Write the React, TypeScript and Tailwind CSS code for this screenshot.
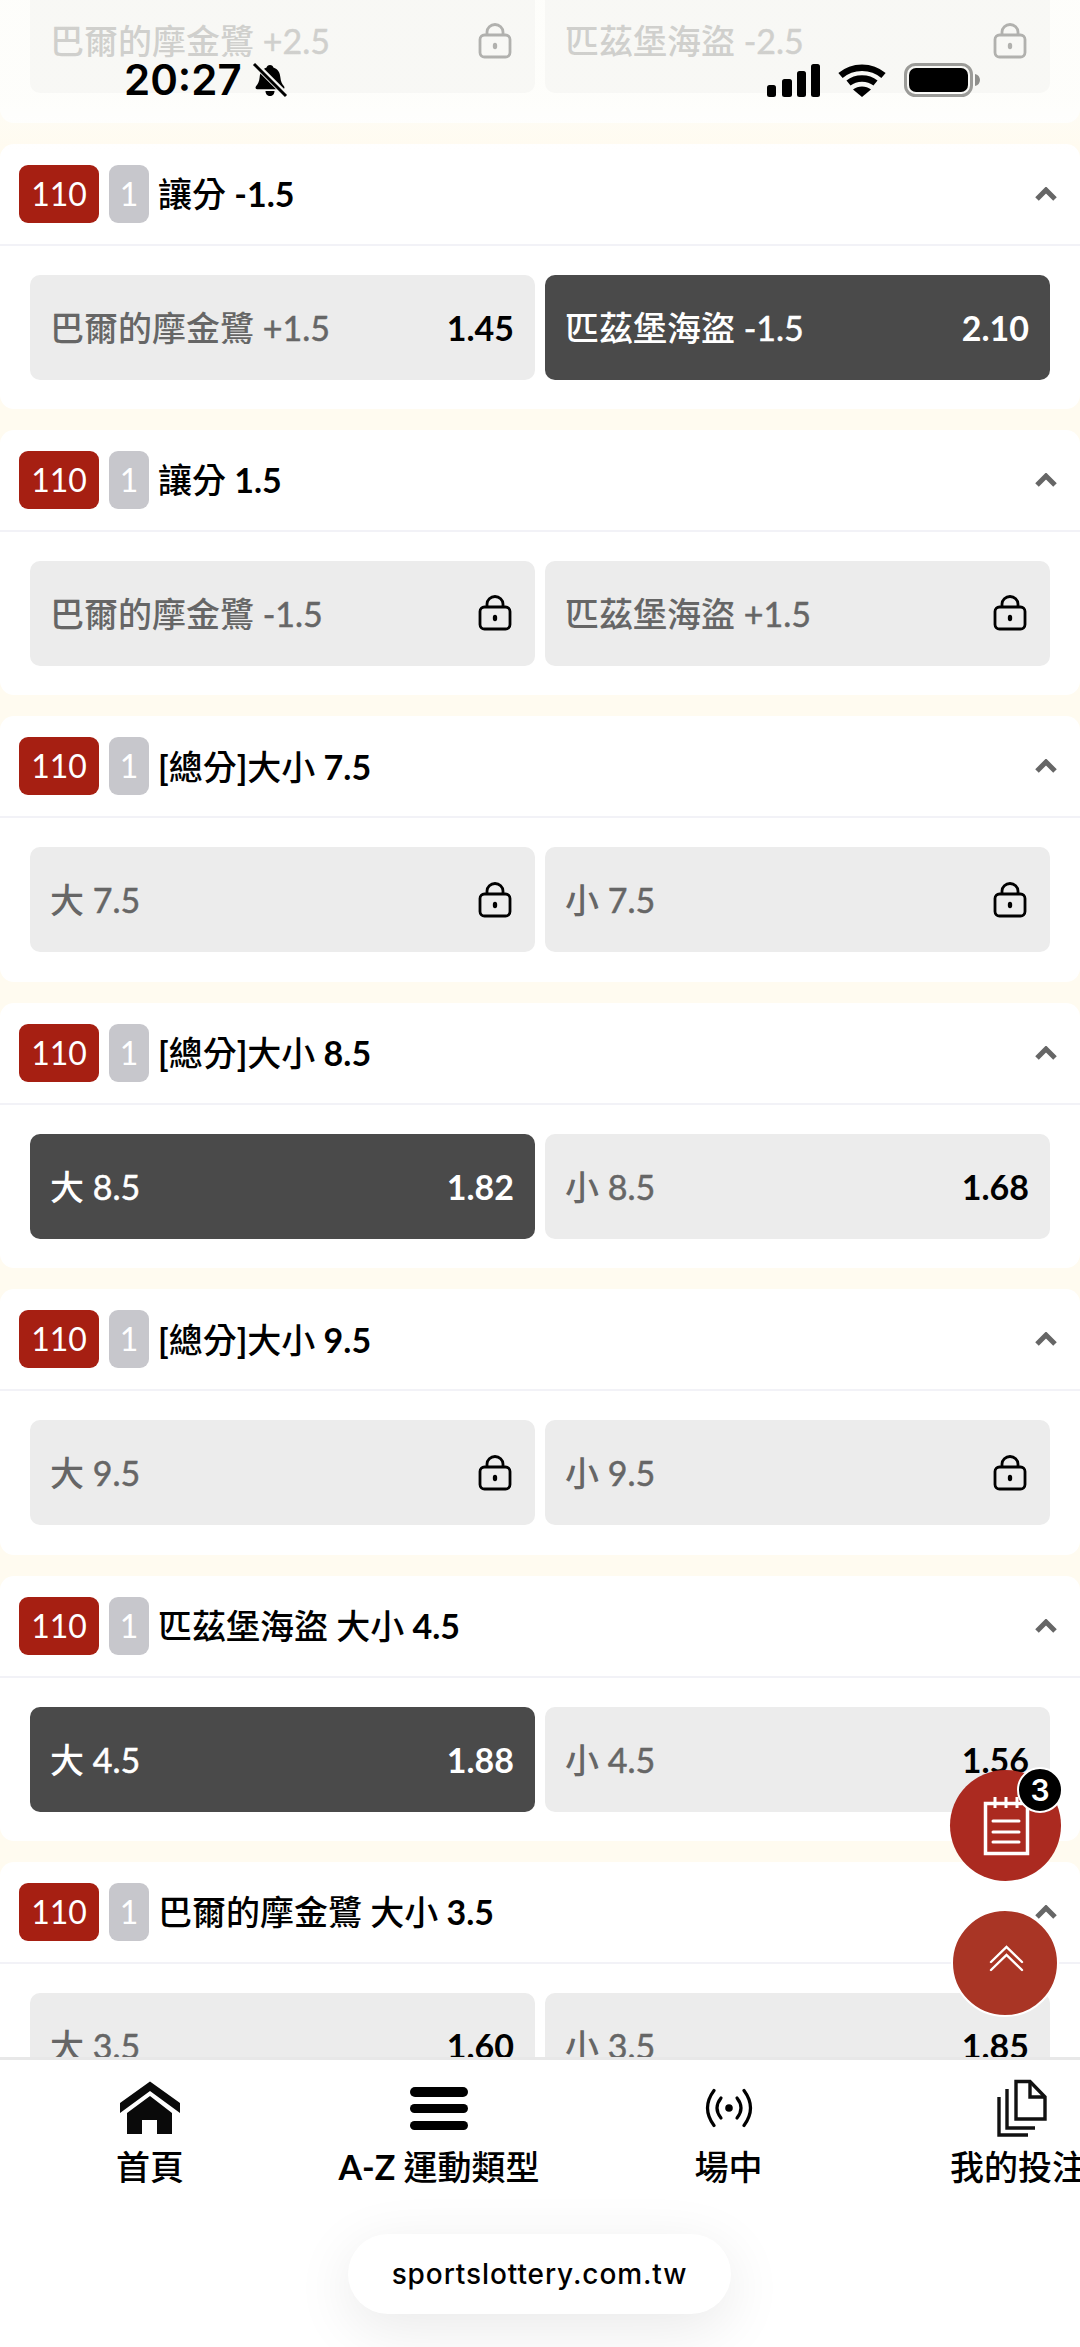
const FONT = "font-['Lato','Noto_Sans_CJK_TC',sans-serif]"

type Outcome = { label: string; odds?: string; selected?: boolean }
type Market = { title: string; outcomes: [Outcome, Outcome] }

const MARKETS: Market[] = [
  { title: '讓分 -2.5', outcomes: [{ label: '巴爾的摩金鷺 +2.5' }, { label: '匹茲堡海盜 -2.5' }] },
  {
    title: '讓分 -1.5',
    outcomes: [
      { label: '巴爾的摩金鷺 +1.5', odds: '1.45' },
      { label: '匹茲堡海盜 -1.5', odds: '2.10', selected: true },
    ],
  },
  { title: '讓分 1.5', outcomes: [{ label: '巴爾的摩金鷺 -1.5' }, { label: '匹茲堡海盜 +1.5' }] },
  { title: '[總分]大小 7.5', outcomes: [{ label: '大 7.5' }, { label: '小 7.5' }] },
  {
    title: '[總分]大小 8.5',
    outcomes: [
      { label: '大 8.5', odds: '1.82', selected: true },
      { label: '小 8.5', odds: '1.68' },
    ],
  },
  { title: '[總分]大小 9.5', outcomes: [{ label: '大 9.5' }, { label: '小 9.5' }] },
  {
    title: '匹茲堡海盜 大小 4.5',
    outcomes: [
      { label: '大 4.5', odds: '1.88', selected: true },
      { label: '小 4.5', odds: '1.56' },
    ],
  },
  {
    title: '巴爾的摩金鷺 大小 3.5',
    outcomes: [
      { label: '大 3.5', odds: '1.60' },
      { label: '小 3.5', odds: '1.85' },
    ],
  },
]

// Lato has no in-between weight, so latin runs get their own class next to the medium CJK runs
function MixedText({ text, latinClass }: { text: string; latinClass: string }) {
  return (
    <>
      {text.split(/([\u4e00-\u9fff]+)/).map((part, i) =>
        i % 2 === 1 ? (
          <span key={i} className="font-medium">
            {part}
          </span>
        ) : (
          <span key={i} className={latinClass}>
            {part}
          </span>
        ),
      )}
    </>
  )
}

function LockIcon() {
  return (
    <svg viewBox="0 0 34 36" className="w-[34px] h-[36px] mr-[2px]" fill="none" stroke="black" strokeWidth="2.8">
      <path d="M9 12V9a8 7.5 0 0 1 16 0v3" />
      <rect x="2" y="12" width="30" height="22" rx="4.5" />
      <ellipse cx="17" cy="23" rx="2.2" ry="3.2" fill="black" stroke="none" />
    </svg>
  )
}

function OutcomeButton({ label, odds, selected }: Outcome) {
  return (
    <div
      className={`flex-1 h-[105px] rounded-[10px] pl-[20px] pr-[21px] flex items-center justify-between ${
        selected ? 'bg-[#4a4a4a]' : 'bg-[#ececec]'
      }`}
    >
      <span className={`text-[34px] whitespace-nowrap ${selected ? 'text-white' : 'text-[#666666]'}`}>
        <MixedText text={label} latinClass="[-webkit-text-stroke:0.5px_currentColor]" />
      </span>
      {odds ? (
        <span className={`text-[34px] font-bold ${selected ? 'text-white' : 'text-black'}`}>{odds}</span>
      ) : (
        <LockIcon />
      )}
    </div>
  )
}

function MarketCard({ title, outcomes }: Market) {
  return (
    <section className="bg-white rounded-[14px] h-[265.4px] shrink-0">
      <header className="h-[102px] border-b-2 border-[#f2f2f7] flex items-center pl-[19px] pr-[23px]">
        <span className="w-[80px] h-[58px] rounded-[9px] bg-[#a61f12] text-white text-[32px] flex items-center justify-center">
          110
        </span>
        <span className="w-[40px] h-[58px] ml-[10px] rounded-[9px] bg-[#c7c7cc] text-white text-[32px] flex items-center justify-center">
          1
        </span>
        <h3 className="ml-[9px] text-[34px] text-black whitespace-nowrap">
          <MixedText text={title} latinClass="font-bold" />
        </h3>
        <svg viewBox="0 0 22 14" className="ml-auto w-[22px] h-[14px]" fill="none" stroke="#666666" strokeWidth="5">
          <path d="M2 12 11 3l9 9" />
        </svg>
      </header>
      <div className="flex gap-[10px] px-[30px] pt-[29px]">
        <OutcomeButton {...outcomes[0]} />
        <OutcomeButton {...outcomes[1]} />
      </div>
    </section>
  )
}

function StatusBar() {
  return (
    <div className="absolute top-[60px] left-0 w-full h-[40px] pl-[124px] pr-[100px] flex items-center justify-between">
      <div className="flex items-center gap-[10px]">
        <span className="font-['Inter',sans-serif] text-[42px] font-semibold leading-none text-black">20:27</span>
        <svg viewBox="0 0 36 36" className="w-[36px] h-[36px]">
          <path
            d="M18 3c2 0 3 1 3.400 2.600 4.600 1.400 6.600 5 7 10 .3 4 1.600 6.400 3.600 8.600 1 1.200.4 3-1.400 3H5.400c-1.800 0-2.400-1.800-1.400-3 2-2.200 3.300-4.600 3.600-8.600.4-5 2.400-8.600 7-10C15 4 16 3 18 3z"
            fill="black"
          />
          <path d="M13.500 29h9c0 3-2 5-4.500 5s-4.500-2-4.500-5z" fill="black" />
          <path d="M3 2l31 31" stroke="#f5f5f2" strokeWidth="6" />
          <path d="M2 2l32 32" stroke="black" strokeWidth="3" />
        </svg>
      </div>
      <div className="flex items-center gap-[18px]">
        <svg viewBox="0 0 53 33" className="w-[53px] h-[33px]" fill="black">
          <rect x="0" y="21" width="9" height="12" rx="2.500" />
          <rect x="15" y="15" width="10" height="18" rx="2.500" />
          <rect x="30" y="7" width="9" height="26" rx="2.500" />
          <rect x="44" y="0" width="9" height="33" rx="2.500" />
        </svg>
        <svg viewBox="0 0 48 33" className="w-[48px] h-[33px]" fill="none" stroke="black" strokeWidth="6.500">
          <path d="M2.500 11.500c12-10.500 31-10.500 43 0" />
          <path d="M10.500 19c7.500-6 19.500-6 27 0" />
          <path d="M24 33l-9-7.500c5-4 13-4 18 0z" fill="black" stroke="none" />
        </svg>
        <svg viewBox="0 0 76 34" className="w-[76px] h-[34px]">
          <rect x="1.500" y="1.500" width="66" height="31" rx="10" fill="none" stroke="#9b9b98" strokeWidth="3" />
          <rect x="5" y="5" width="59" height="24" rx="7" fill="black" />
          <path d="M71 11c3 .6 5 3 5 6s-2 5.400-5 6z" fill="#8f8f8c" />
        </svg>
      </div>
    </div>
  )
}

function NavItem({ label, width, children }: { label: string; width: string; children: React.ReactNode }) {
  return (
    <div className={`${width} shrink-0 flex flex-col items-center`}>
      <div className="h-[60px] flex items-center justify-center">{children}</div>
      <span className="mt-[9px] text-[34px] leading-[40px] text-black whitespace-nowrap">
        <MixedText text={label} latinClass="font-bold" />
      </span>
    </div>
  )
}

function BottomNav() {
  return (
    <nav className="absolute left-0 right-0 bottom-0 h-[290px] bg-white border-t-[3px] border-[#e8e8e8] overflow-hidden">
      <div className="flex pl-[5px] pt-[18px]">
        <NavItem label="首頁" width="w-[290px]">
          <svg viewBox="0 0 60 56" className="w-[60px] h-[56px]" fill="#0a0a0a">
            <path d="M30 1.500 60 23v10L30 11 0 33V23z" />
            <path d="M30 16 52 33v21H37V40H22v14H7V33z" />
          </svg>
        </NavItem>
        <NavItem label="A-Z 運動類型" width="w-[288px]">
          <svg viewBox="0 0 58 43" className="w-[58px] h-[43px]" fill="black">
            <rect x="0" y="0" width="58" height="10" rx="5" />
            <rect x="0" y="17" width="58" height="9" rx="4.500" />
            <rect x="0" y="34" width="58" height="9" rx="4.500" />
          </svg>
        </NavItem>
        <NavItem label="場中" width="w-[291px]">
          <svg viewBox="0 0 48 40" className="w-[48px] h-[40px]" fill="none" stroke="black" strokeWidth="3.200" strokeLinecap="round">
            <path d="M9 2.500Q-4 20 9 37.500" />
            <path d="M39 2.500Q52 20 39 37.500" />
            <path d="M16 10Q8 20 16 30" />
            <path d="M32 10Q40 20 32 30" />
            <circle cx="24" cy="20" r="3.800" fill="black" stroke="none" />
          </svg>
        </NavItem>
        <NavItem label="我的投注" width="w-[288px]">
          <svg viewBox="0 0 54 60" className="w-[54px] h-[60px] ml-[8px]" fill="none" stroke="#111111" strokeWidth="3.400">
            <path d="M21 3.500h14L50 19v22H21z" />
            <path d="M35 3.500V19h15" />
            <path d="M12 11v39h28" />
            <path d="M4 19v38h29" />
          </svg>
        </NavItem>
      </div>
      <div className="absolute left-[348px] top-[174px] w-[383px] h-[80px] rounded-[40px] bg-white shadow-[0_14px_60px_rgba(0,0,0,0.09)] flex items-center justify-center">
        <span className="font-['Inter',sans-serif] text-[28px] font-medium tracking-[0.9px] text-black">
          sportslottery.com.tw
        </span>
      </div>
    </nav>
  )
}

function BetSlipButton() {
  return (
    <button className="absolute left-[950px] top-[1770px] w-[111px] h-[111px] rounded-full bg-[#ab2a20]">
      <svg viewBox="0 0 111 111" className="w-full h-full" fill="none" stroke="white">
        <rect x="35.500" y="33.500" width="42" height="50" strokeWidth="3.500" />
        <path d="M45 27v11M56 27v11M67 27v11" strokeWidth="3" />
        <path d="M43 51h26M43 62h26M43 72h26" strokeWidth="3" strokeLinecap="round" />
      </svg>
      <span className="absolute left-[67px] top-[-3px] w-[46px] h-[46px] rounded-full bg-black border-2 border-white text-white text-[30px] font-semibold font-['Inter',sans-serif] flex items-center justify-center">
        3
      </span>
    </button>
  )
}

function ScrollTopButton() {
  return (
    <button className="absolute left-[951px] top-[1909px] w-[108px] h-[108px] rounded-full bg-[#a93525] border-2 border-white">
      <svg viewBox="0 0 104 104" className="w-full h-full" fill="none" stroke="white" strokeWidth="2.400" strokeLinecap="round">
        <path d="M38 51 53.500 36 69 51" />
        <path d="M38 59 53.500 44 69 59" />
      </svg>
    </button>
  )
}

export default function App() {
  return (
    <div className={`relative w-[1080px] h-[2347px] overflow-hidden bg-[#fffbf0] ${FONT}`}>
      <main className="flex flex-col gap-[21px] -mt-[142.8px]">
        {MARKETS.map((m) => (
          <MarketCard key={m.title} {...m} />
        ))}
      </main>

      {/* translucent strip behind the status bar */}
      <div className="absolute top-0 left-0 w-full h-[150px] bg-gradient-to-b from-[#fdfdf9]/70 via-[#fdfdf9]/70 via-[65%] to-transparent" />
      <StatusBar />

      <BetSlipButton />
      <ScrollTopButton />
      <BottomNav />
    </div>
  )
}
